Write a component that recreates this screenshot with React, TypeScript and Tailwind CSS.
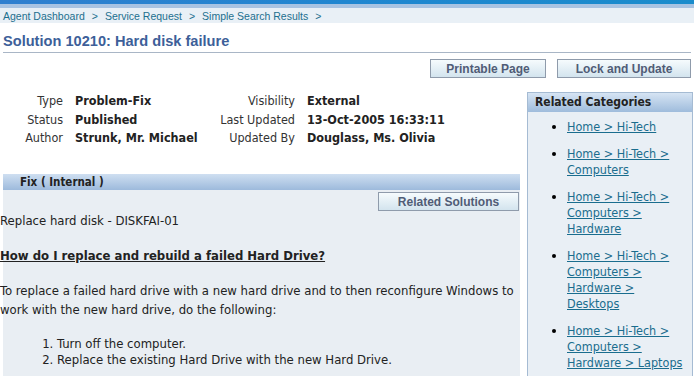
import React from 'react';

const body = { fontFamily: '"DejaVu Sans Condensed", "DejaVu Sans", sans-serif' };
const arial = { fontFamily: '"Liberation Sans", Arial, sans-serif' };

const crumbs = ['Agent Dashboard', 'Service Request', 'Simple Search Results'];

const info = [
  ['Type', 'Problem-Fix', 'Visibility', 'External'],
  ['Status', 'Published', 'Last Updated', '13-Oct-2005 16:33:11'],
  ['Author', 'Strunk, Mr. Michael', 'Updated By', 'Douglass, Ms. Olivia'],
];

const categories = [
  ['Home > Hi-Tech'],
  ['Home > Hi-Tech >', 'Computers'],
  ['Home > Hi-Tech >', 'Computers >', 'Hardware'],
  ['Home > Hi-Tech >', 'Computers >', 'Hardware >', 'Desktops'],
  ['Home > Hi-Tech >', 'Computers >', 'Hardware > Laptops'],
];

const Btn: React.FC<{ label: string; className?: string }> = ({ label, className }) => (
  <button
    style={arial}
    className={`h-[19px] border border-[#8f9bab] bg-gradient-to-b from-[#f6fbfd] to-[#d3e4ee] text-[12px] font-bold text-[#505c76] ${className ?? ''}`}
  >
    {label}
  </button>
);

export default function App() {
  return (
    <div className="w-[694px] h-[376px] overflow-hidden bg-white text-[#222]">
      {/* top bars */}
      <div className="h-[4px] bg-gradient-to-r from-[#2f7fcf] via-[#1f86d0] to-[#1a8ccc]" />
      <div className="h-[4px] bg-[#a8c3e2]" />
      <div style={arial} className="h-[15px] bg-[#e9f0f6] pl-[3px] pt-px text-[10.5px] leading-[15px] text-[#1c6f8e] flex gap-[7px]">
        {crumbs.map((c) => (
          <React.Fragment key={c}>
            <span>{c}</span>
            <span>&gt;</span>
          </React.Fragment>
        ))}
      </div>

      {/* title */}
      <div className="mx-[3px] mt-[10px] border-b border-[#a9b6c6] pb-[2px]">
        <h1 style={arial} className="text-[14.6px] leading-[17px] font-bold text-[#3d5f99]">
          Solution 10210: Hard disk failure
        </h1>
      </div>

      {/* action buttons */}
      <div className="flex justify-end gap-[11px] pr-[3px] mt-[6px]">
        <Btn label="Printable Page" className="w-[116px]" />
        <Btn label="Lock and Update" className="w-[134px]" />
      </div>

      <div className="flex mt-[14px]">
        {/* left column */}
        <div className="w-[520px] shrink-0" style={body}>
          <div className="grid grid-cols-[63px_126px_82px_auto] gap-x-[12px] text-[12.5px] leading-[18.5px]">
            {info.map(([l1, v1, l2, v2]) => (
              <React.Fragment key={l1}>
                <span className="text-right text-[#333]">{l1}</span>
                <span className="font-bold">{v1}</span>
                <span className="text-right text-[#333] whitespace-nowrap">{l2}</span>
                <span className="font-bold">{v2}</span>
              </React.Fragment>
            ))}
          </div>

          <div className="mt-[26px] ml-[3px] h-[16px] bg-gradient-to-b from-[#cfdff1] to-[#9dbadc] pl-[17px] text-[11.5px] leading-[16px] font-bold text-[#222]">
            Fix ( Internal )
          </div>
          <div className="ml-[3px] h-[200px] bg-[#e9eef3] text-[13px] text-[#222]">
            <div className="flex justify-end pt-[2px] pr-px">
              <Btn label="Related Solutions" className="w-[141px]" />
            </div>
            <p className="-ml-[3px] leading-[19px]">Replace hard disk - DISKFAI-01</p>
            <p className="-ml-[3px] mt-[16px] leading-[19px] font-bold underline">How do I replace and rebuild a failed Hard Drive?</p>
            <p className="-ml-[3px] mt-[16px] leading-[19px] pr-[6px]">
              To replace a failed hard drive with a new hard drive and to then reconfigure Windows to work with the new hard drive, do the following:
            </p>
            <ol className="list-decimal ml-[54px] mt-[17px] leading-[16px]">
              <li>Turn off the computer.</li>
              <li>Replace the existing Hard Drive with the new Hard Drive.</li>
            </ol>
          </div>
        </div>

        {/* right column */}
        <div className="ml-[7px] w-[166px] h-[300px] border border-[#a5bbd3] bg-[#e9eff5]" style={body}>
          <div className="h-[19px] bg-gradient-to-b from-[#d6e4f3] to-[#9fbcdc] pl-[7px] text-[12px] leading-[19px] font-bold text-[#222]">
            Related Categories
          </div>
          <ul className="list-disc pl-[39px] pt-[7px] text-[12.5px] leading-[16px] marker:text-black">
            {categories.map((lines, i) => (
              <li key={i} className="mb-[11px]">
                <a className="underline text-[#1a6d8e]">
                  {lines.map((l, j) => (
                    <React.Fragment key={j}>
                      {j > 0 && <br />}
                      {l}
                    </React.Fragment>
                  ))}
                </a>
              </li>
            ))}
          </ul>
        </div>
      </div>
    </div>
  );
}
